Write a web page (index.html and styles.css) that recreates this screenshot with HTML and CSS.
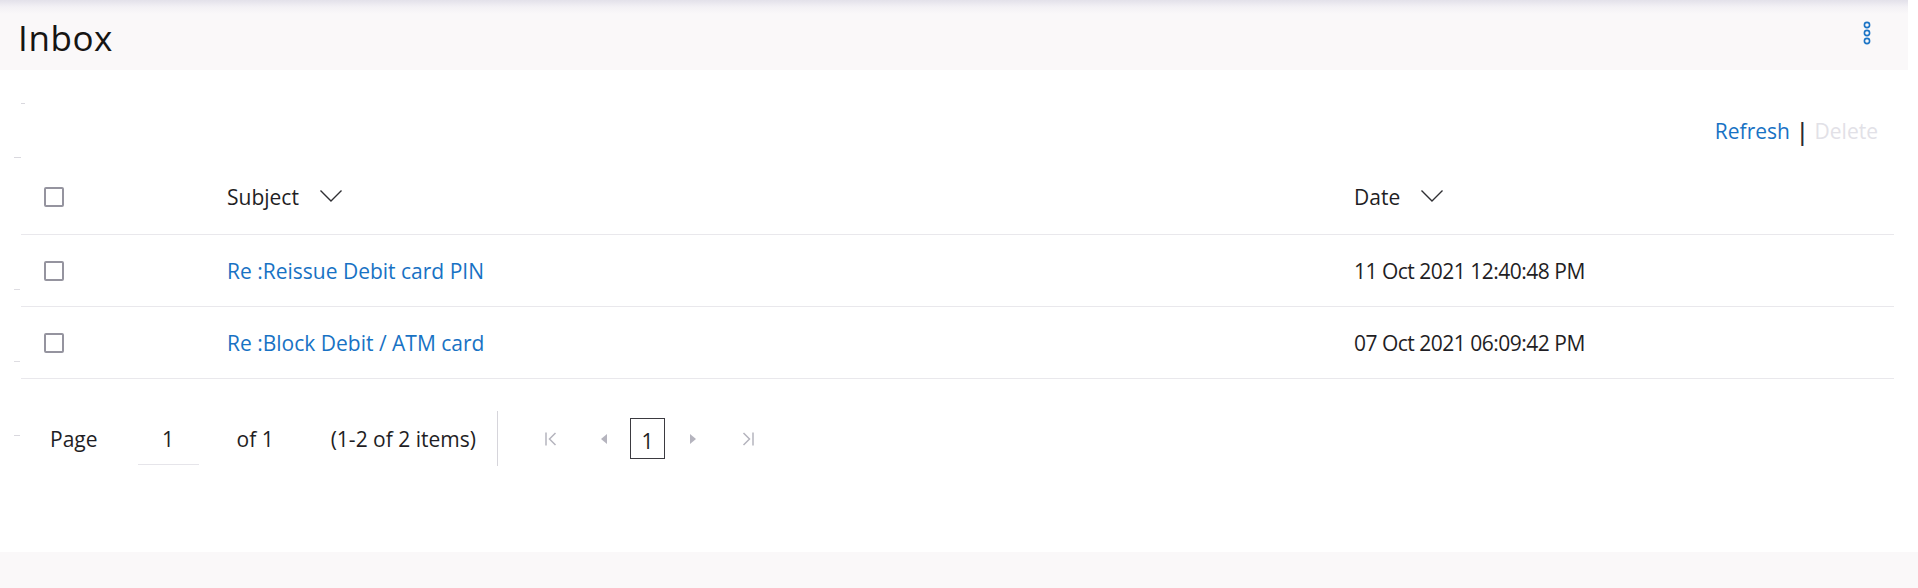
FILE: index.html
```html
<!DOCTYPE html>
<html lang="en">
<head>
<meta charset="utf-8">
<title>Inbox</title>
<link rel="stylesheet" href="styles.css">
</head>
<body>
<div class="app">
  <main class="main">
    <header class="page-header">
      <h1 class="title">Inbox</h1>
      <button class="kebab" aria-label="More">
        <svg width="10" height="26" viewBox="0 0 10 26"><circle cx="5" cy="4" r="2.6" fill="none" stroke="#1b74c5" stroke-width="1.6"/><circle cx="5" cy="12" r="2.6" fill="none" stroke="#1b74c5" stroke-width="1.6"/><circle cx="5" cy="20" r="2.6" fill="none" stroke="#1b74c5" stroke-width="1.6"/></svg>
      </button>
    </header>

    <section class="content">
      <span class="tick tick-a"></span>
      <span class="tick tick-b"></span>
      <div class="toolbar">
        <a class="link" href="#">Refresh</a>
        <span class="pipe">|</span>
        <span class="disabled">Delete</span>
      </div>

      <div class="table">
        <div class="row head">
          <div class="cell"><span class="checkbox"></span></div>
          <div class="cell">Subject
            <svg class="chev" width="24" height="14" viewBox="0 0 24 14"><polyline points="1.5,1.5 12,12 22.5,1.5" fill="none" stroke="#2f2f33" stroke-width="1.4"/></svg>
          </div>
          <div class="cell">Date
            <svg class="chev" width="24" height="14" viewBox="0 0 24 14"><polyline points="1.5,1.5 12,12 22.5,1.5" fill="none" stroke="#2f2f33" stroke-width="1.4"/></svg>
          </div>
        </div>
        <div class="row">
          <div class="cell"><span class="checkbox"></span></div>
          <div class="cell"><a class="link" href="#">Re :Reissue Debit card PIN</a></div>
          <div class="cell date">11 Oct 2021 12:40:48 PM</div>
        </div>
        <div class="row">
          <div class="cell"><span class="checkbox"></span></div>
          <div class="cell"><a class="link" href="#">Re :Block Debit / ATM card</a></div>
          <div class="cell date">07 Oct 2021 06:09:42 PM</div>
        </div>
      </div>

      <div class="pager">
        <span class="tick tick-p"></span>
        <span class="pg-label">Page</span>
        <span class="pg-input">1</span>
        <span class="pg-of">of 1</span>
        <span class="pg-items">(1-2 of 2 items)</span>
        <span class="pg-sep"></span>
        <div class="pg-nav">
          <svg class="pg-first" width="14" height="16" viewBox="0 0 14 16"><line x1="2" y1="1.5" x2="2" y2="14.5" stroke="#b5b4be" stroke-width="1.5"/><polyline points="11.5,2 5.5,8 11.5,14" fill="none" stroke="#b5b4be" stroke-width="1.5"/></svg>
          <svg class="pg-prev" width="8" height="14" viewBox="0 0 8 14"><polygon points="7,2 1,7 7,12" fill="#b5b4be"/></svg>
          <span class="pg-current">1</span>
          <svg class="pg-next" width="8" height="14" viewBox="0 0 8 14"><polygon points="1,2 7,7 1,12" fill="#b5b4be"/></svg>
          <svg class="pg-last" width="14" height="16" viewBox="0 0 14 16"><polyline points="2.5,2 8.5,8 2.5,14" fill="none" stroke="#b5b4be" stroke-width="1.5"/><line x1="12" y1="1.5" x2="12" y2="14.5" stroke="#b5b4be" stroke-width="1.5"/></svg>
        </div>
      </div>
    </section>
  </main>
  <footer class="footer-band"></footer>
</div>
</body>
</html>
```

FILE: styles.css
```css
* { box-sizing: border-box; }

html, body {
  margin: 0;
  padding: 0;
  height: 100%;
  background: #ffffff;
}

body {
  font-family: "Open Sans", "Noto Sans", sans-serif;
  font-size: 21px;
  color: #1f1e24;
}

.app {
  display: flex;
  flex-direction: column;
  height: 100vh;
}

.main {
  height: 552px;
  width: 1908px;
}

.page-header {
  height: 70px;
  background: linear-gradient(#e3e1ea 0px, #f3f1f5 7px, #faf8f9 14px, #faf8f9 100%);
  display: flex;
  align-items: center;
  justify-content: space-between;
  padding: 4px 36px 0 18px;
}

.title {
  margin: 0;
  font-weight: 400;
  font-size: 35px;
  letter-spacing: 0.6px;
  color: #161513;
}

.kebab {
  border: 0;
  background: none;
  padding: 0;
  display: flex;
  margin-top: -6px;
}

.content {
  position: relative;
  padding: 47px 14px 0 21px;
}

.tick {
  position: absolute;
  height: 1px;
  background: #d9d8de;
}
.tick-a { left: 21px; top: 33px; width: 4px; }
.tick-b { left: 14px; top: 87px; width: 7px; }

.toolbar {
  height: 28px;
  display: flex;
  justify-content: flex-end;
  align-items: center;
  gap: 6px;
  padding-right: 16px;
  line-height: 28px;
}

.link {
  color: #1872c4;
  text-decoration: none;
}

.pipe {
  color: #2a2930;
  font-size: 23px;
  font-weight: 600;
}
.disabled { color: #e2e1e7; }

.table {
  margin-top: 18px;
}

.row {
  position: relative;
  display: grid;
  grid-template-columns: 206px 1127px 1fr;
  align-items: center;
  height: 72px;
  border-bottom: 1px solid #e9e8ec;
}

.row:not(.head)::before {
  content: "";
  position: absolute;
  left: -7px;
  top: 54px;
  width: 6px;
  height: 1px;
  background: #dedde2;
}

.row.head {
  padding-bottom: 4px;
}

.cell {
  display: flex;
  align-items: center;
  white-space: nowrap;
}

.cell:first-child {
  padding-left: 23px;
}

.date {
  letter-spacing: -0.5px;
}

.checkbox {
  display: inline-block;
  width: 20px;
  height: 20px;
  border: 2px solid #95949f;
  border-radius: 2px;
  background: #fff;
}

.chev {
  margin-left: 20px;
  margin-top: -2px;
}

.pager {
  position: relative;
  display: flex;
  align-items: center;
  height: 55px;
  margin-top: 32px;
  padding-left: 29px;
}

.tick-p { left: -7px; top: 24px; width: 6px; }

.pg-label { margin-right: 40px; }

.pg-input {
  width: 61px;
  height: 44px;
  display: flex;
  align-items: center;
  justify-content: center;
  border-bottom: 1px solid #e6e5ea;
  margin-top: 8px;
  padding-bottom: 6px;
  margin-right: 38px;
}

.pg-of { margin-right: 57px; }

.pg-sep {
  width: 1px;
  height: 55px;
  background: #d6d5db;
  margin-left: 21px;
  margin-right: 46px;
}

.pg-nav {
  display: flex;
  align-items: center;
}

.pg-first { margin-right: 42px; }
.pg-prev { margin-right: 22px; }
.pg-next { margin-left: 24px; margin-right: 44px; }

.pg-current {
  width: 35px;
  height: 41px;
  border: 1px solid #3b3a40;
  display: flex;
  align-items: center;
  justify-content: center;
  padding-top: 4px;
}

.footer-band {
  flex: 1;
  background: #faf8f9;
}
```
